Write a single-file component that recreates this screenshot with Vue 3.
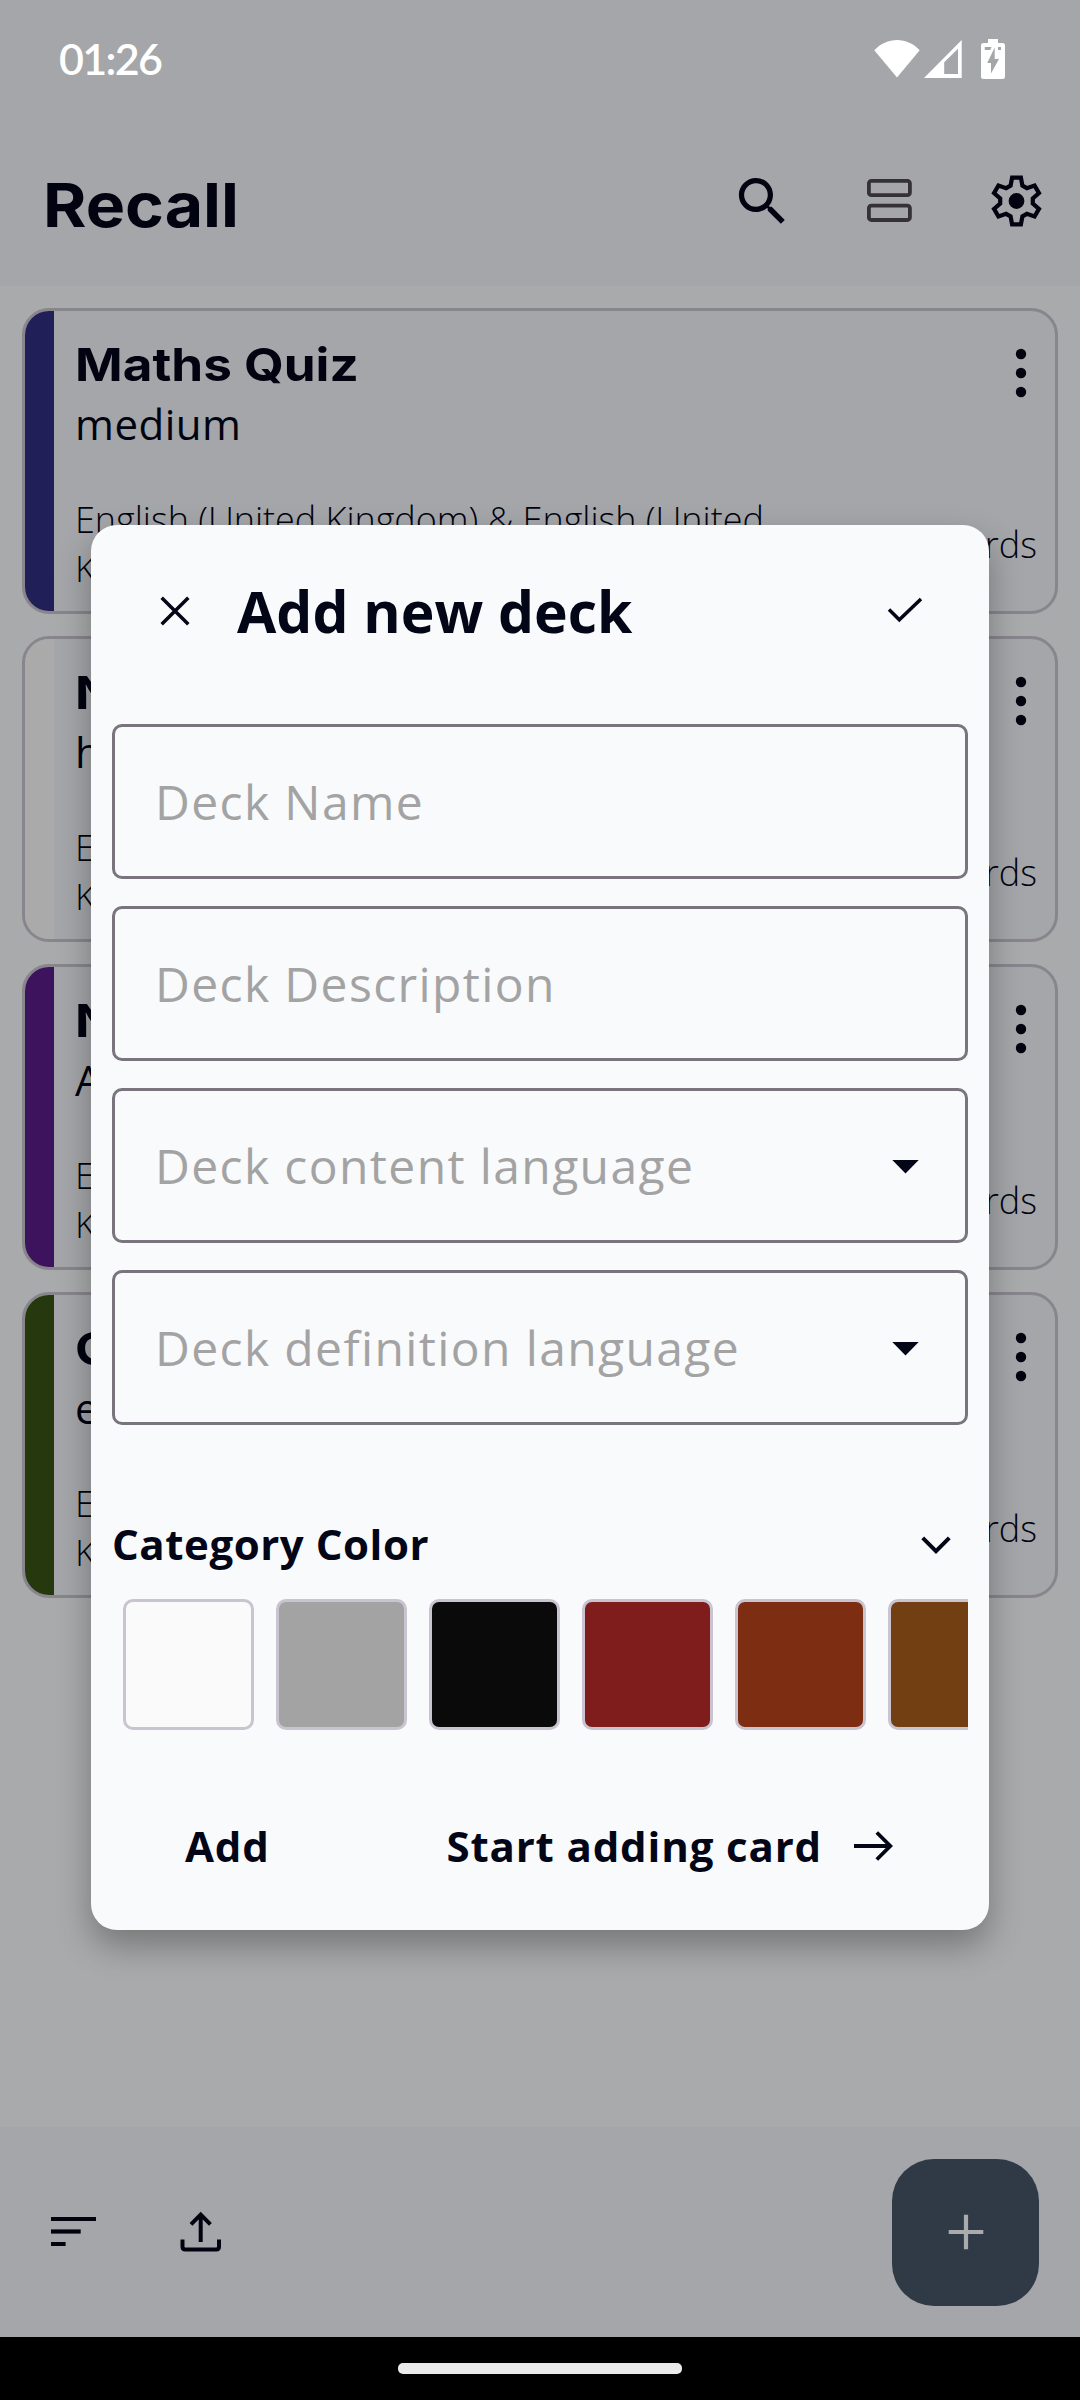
<script setup>
const decks = [
  { title: 'Maths Quiz', level: 'medium', color: '#211f58' },
  { title: 'Nature', level: 'hard', color: '#aaaaaa' },
  { title: 'New words', level: 'Advanced', color: '#3c135c' },
  { title: 'Geography', level: 'easy', color: '#25380e' },
]

const fields = [
  { label: 'Deck Name', select: false },
  { label: 'Deck Description', select: false },
  { label: 'Deck content language', select: true },
  { label: 'Deck definition language', select: true },
]

const swatches = ['#fafafa', '#a3a3a3', '#0a0a0a', '#7f1d1d', '#7c2d12', '#713f12']

// Outline of a six-toothed cog: one tooth profile repeated every 60 degrees.
const tooth = [[-5.9, -15.4], [-4.4, -23.4], [4.4, -23.4], [5.9, -15.4]]
const cog = Array.from({ length: 6 }, (_, k) => {
  const a = (k * Math.PI) / 3
  return tooth.map(([x, y]) =>
    [x * Math.cos(a) - y * Math.sin(a), x * Math.sin(a) + y * Math.cos(a)]
      .map((n) => n.toFixed(2))
      .join(','),
  )
}).flat().join(' ')
</script>

<template>
  <div class="screen">
    <header class="top">
      <div class="status">
        <span class="time">01:26</span>
        <div class="status-icons">
          <svg class="wifi" width="46" height="38" viewBox="0 0 46 38" fill="#fff">
            <path d="M0.3 10.3C6.5 3.6 14.500 0 23 0s16.500 3.600 22.700 10.300L23 37.600z" />
          </svg>
          <svg class="signal" width="38" height="38" viewBox="0 0 38 38">
            <path fill="#fff" fill-rule="evenodd" d="M0 38 37.700 0V38zM20.200 34H34V8.800L20.200 22.300z" />
          </svg>
          <svg width="24" height="40" viewBox="0 0 24 40">
            <path
              fill="#fff"
              fill-rule="evenodd"
              d="M7 0h10v4h4.500A2.500 2.500 0 0 1 24 6.500v31a2.500 2.500 0 0 1-2.500 2.500h-19A2.500 2.500 0 0 1 0 37.500v-31A2.500 2.500 0 0 1 2.500 4H7zM3.800 8v3h5.400l1.400-3zM13.700 8.500L6.200 24H10v10.500L18 20h-4.300zM17 8v3h3V8z"
            />
          </svg>
        </div>
      </div>
      <div class="appbar">
        <h1 class="brand">Recall</h1>
        <div class="actions">
          <svg width="63" height="63" viewBox="0 0 24 24" fill="#010410">
            <path d="M15.500 14h-.79l-.28-.27C15.410 12.590 16 11.110 16 9.500 16 5.910 13.090 3 9.500 3S3 5.910 3 9.500 5.910 16 9.500 16c1.610 0 3.090-.59 4.230-1.570l.27.28v.79l5 4.990L20.490 19l-4.990-5zm-6 0C7.010 14 5 11.990 5 9.500S7.010 5 9.500 5 14 7.010 14 9.500 11.990 14 9.500 14z" />
          </svg>
          <svg width="63" height="63" viewBox="0 0 63 63" fill="none" stroke="#353136" stroke-width="3.800">
            <rect x="10.900" y="10.800" width="41" height="14.400" rx="2.500" />
            <rect x="10.900" y="35.600" width="41" height="14.400" rx="2.500" />
          </svg>
          <svg width="63" height="63" viewBox="-31.500 -31 63 63">
            <polygon :points="cog" fill="none" stroke="#010410" stroke-width="4.200" />
            <circle r="7.900" fill="#010410" />
          </svg>
        </div>
      </div>
    </header>

    <main class="list">
      <article v-for="d in decks" :key="d.title" class="card">
        <div class="strip" :style="{ background: d.color }"></div>
        <div class="card-body">
          <div class="card-head">
            <div>
              <h2 class="card-title">{{ d.title }}</h2>
              <p class="level">{{ d.level }}</p>
            </div>
            <svg class="more" width="12" height="50" viewBox="0 0 12 50" fill="#010410">
              <circle cx="6" cy="6" r="5.200" />
              <circle cx="6" cy="25" r="5.200" />
              <circle cx="6" cy="44" r="5.200" />
            </svg>
          </div>
          <div class="card-foot">
            <p class="langs">English (United Kingdom) &amp; English (United Kingdom)</p>
            <span class="count">5 cards</span>
          </div>
        </div>
      </article>
    </main>

    <footer class="bottom">
      <div class="tools">
        <svg width="46" height="30" viewBox="0 0 46 30" fill="#010410">
          <rect width="45" height="4" y="0" />
          <rect width="29.700" height="4.200" y="12.400" />
          <rect width="14.600" height="4" y="25" />
        </svg>
        <svg width="42" height="42" viewBox="0 0 42 42" fill="none" stroke="#010410" stroke-width="4">
          <path d="M2.500 28.500v7.300q0 2.800 2.800 2.800h30.900q2.800 0 2.800-2.800v-7.300" />
          <path d="M20.700 31V4.500M11 13.300l9.700-9.700 9.700 9.700" />
        </svg>
      </div>
      <button class="fab">
        <svg width="36" height="36" viewBox="0 0 36 36" stroke="#a9aaab" stroke-width="4.200">
          <path d="M18 .7v34.600M.7 18h34.600" />
        </svg>
      </button>
    </footer>
    <div class="nav"><div class="handle"></div></div>

    <section class="dialog">
      <div class="dialog-head">
        <svg class="close" width="30" height="30" viewBox="0 0 30 30" stroke="#020617" stroke-width="3.500">
          <path d="M1.700 1.700l26.600 26.600M28.300 1.700L1.700 28.300" />
        </svg>
        <h3 class="dialog-title">Add new deck</h3>
        <svg class="check" width="36" height="26" viewBox="0 0 36 26" fill="none" stroke="#020617" stroke-width="3.500">
          <path d="M2 12.500l10.300 10.300L34 2" />
        </svg>
      </div>

      <div class="fields">
        <div v-for="f in fields" :key="f.label" class="field">
          <span class="placeholder">{{ f.label }}</span>
          <svg v-if="f.select" class="caret" width="27" height="14" viewBox="0 0 27 14" fill="#020617">
            <path d="M.3 0h26.400L13.500 13.400z" />
          </svg>
        </div>
      </div>

      <div class="category">
        <span class="category-label">Category Color</span>
        <svg class="chevron" width="30" height="19" viewBox="0 0 30 19" fill="none" stroke="#020617" stroke-width="4">
          <path d="M1.700 1.900L15 15.200 28.300 1.900" />
        </svg>
      </div>
      <div class="swatches">
        <div v-for="c in swatches" :key="c" class="swatch" :style="{ background: c }"></div>
      </div>

      <div class="buttons">
        <span class="btn">Add</span>
        <span class="btn start">
          <span class="start-label">Start adding card</span>
          <svg width="40" height="30" viewBox="0 0 40 30" fill="none" stroke="#020617" stroke-width="3.800">
            <path d="M0 15h37M22.800 1.500L36.300 15 22.800 28.500" />
          </svg>
        </span>
      </div>
    </section>
  </div>
</template>

<style>
body {
  margin: 0;
  background: #a9aaab;
}
</style>

<style scoped>
.screen {
  position: relative;
  display: flex;
  flex-direction: column;
  width: 1080px;
  height: 2400px;
  overflow: hidden;
  background: #a9aaab;
  color: #010410;
  font-family: "Open Sans", "Noto Sans", sans-serif;
}
h1, h2, h3, p { margin: 0; }
svg { display: block; flex: none; }

.top {
  height: 286px;
  background: #a5a6a9;
}
.status {
  display: flex;
  align-items: center;
  justify-content: space-between;
  height: 118px;
  padding: 0 75px 0 59px;
}
.time {
  color: #fff;
  font-family: Lato, sans-serif;
  font-size: 43px;
  font-weight: 600;
  letter-spacing: -1.700px;
  line-height: 50px;
}
.status-icons {
  display: flex;
  align-items: center;
}
.signal { margin: 0 19px 0 4px; }
.appbar {
  display: flex;
  align-items: center;
  justify-content: space-between;
  height: 167px;
  padding: 0 32px 0 43px;
}
.brand {
  padding-top: 7px;
  font-family: Inter, sans-serif;
  font-size: 61px;
  font-weight: 700;
  line-height: 72px;
  transform: scaleX(1.085);
  transform-origin: left;
}
.actions {
  display: flex;
  gap: 64px;
}

.list {
  display: flex;
  flex: 1;
  flex-direction: column;
  gap: 22px;
  padding: 22px;
}
.card {
  display: flex;
  box-sizing: border-box;
  height: 306px;
  overflow: hidden;
  border: 3px solid #89858d;
  border-radius: 27px;
  background: #a5a6a9;
}
.strip {
  flex: none;
  width: 29px;
}
.card-body {
  display: flex;
  flex: 1;
  flex-direction: column;
  justify-content: space-between;
  padding: 25px 18px 18px 21px;
}
.card-head {
  display: flex;
  justify-content: space-between;
}
.card-title {
  width: max-content;
  margin-bottom: 2px;
  font-family: Inter, sans-serif;
  font-size: 45.500px;
  font-weight: 700;
  line-height: 57px;
  white-space: nowrap;
  transform: scaleX(1.125);
  transform-origin: left;
}
.level {
  font-size: 42px;
  letter-spacing: 0.500px;
  line-height: 57px;
}
.more { margin: 12px 10.500px 0 0; }
.card-foot {
  display: flex;
  align-items: center;
  justify-content: space-between;
  font-size: 36px;
  font-weight: 300;
  line-height: 49px;
}
.langs {
  width: 720px;
  letter-spacing: -0.040px;
}

.bottom {
  display: flex;
  align-items: center;
  justify-content: space-between;
  box-sizing: border-box;
  height: 210px;
  padding: 0 41px 0 51px;
  background: #a5a6a9;
}
.tools {
  display: flex;
  align-items: center;
  gap: 83px;
}
.fab {
  display: flex;
  align-items: center;
  justify-content: center;
  width: 147px;
  height: 147px;
  padding: 0;
  border: 0;
  border-radius: 42px;
  background: #303a47;
}
.nav {
  display: flex;
  align-items: center;
  justify-content: center;
  height: 63px;
  background: #000;
}
.handle {
  width: 284px;
  height: 11px;
  border-radius: 5px;
  background: #ebebeb;
}

.dialog {
  position: absolute;
  top: 525px;
  left: 91px;
  box-sizing: border-box;
  width: 898px;
  height: 1405px;
  padding: 0 21px;
  border-radius: 26px;
  background: #f9fafc;
  box-shadow: 0 16px 34px rgba(0, 0, 0, 0.3);
  color: #020617;
}
.dialog-head {
  display: flex;
  align-items: center;
  height: 171px;
  padding: 0 45px 0 48px;
}
.dialog-title {
  flex: 1;
  padding: 1px 0 0 47px;
  font-size: 57px;
  font-weight: 700;
  line-height: 76px;
}
.check { margin-bottom: 1px; }
.fields {
  display: flex;
  flex-direction: column;
  gap: 27px;
  padding-top: 28px;
}
.field {
  display: flex;
  align-items: center;
  justify-content: space-between;
  box-sizing: border-box;
  height: 155px;
  padding: 0 46px 0 40px;
  border: 3px solid #79747e;
  border-radius: 10px;
}
.caret { margin-top: 2px; }
.placeholder {
  color: #a3a3a3;
  font-size: 48px;
  letter-spacing: 1.380px;
  line-height: 64px;
}
.category {
  display: flex;
  align-items: center;
  justify-content: space-between;
  height: 56px;
  margin-top: 91px;
  padding-right: 17px;
}
.chevron { margin-top: 2px; }
.category-label {
  font-size: 42px;
  font-weight: 700;
  letter-spacing: 0.550px;
  line-height: 56px;
}
.swatches {
  display: flex;
  gap: 22px;
  margin-top: 27px;
  padding-left: 11px;
  overflow: hidden;
}
.swatch {
  flex: none;
  box-sizing: border-box;
  width: 131px;
  height: 131px;
  border: 3px solid #cac4d0;
  border-radius: 10px;
}
.buttons {
  display: flex;
  align-items: center;
  justify-content: space-between;
  height: 60px;
  margin-top: 86px;
  padding: 0 74px 0 73px;
}
.btn {
  font-size: 42px;
  font-weight: 700;
  letter-spacing: 0.850px;
  line-height: 56px;
}
.start {
  display: flex;
  align-items: center;
  gap: 32px;
}
</style>
